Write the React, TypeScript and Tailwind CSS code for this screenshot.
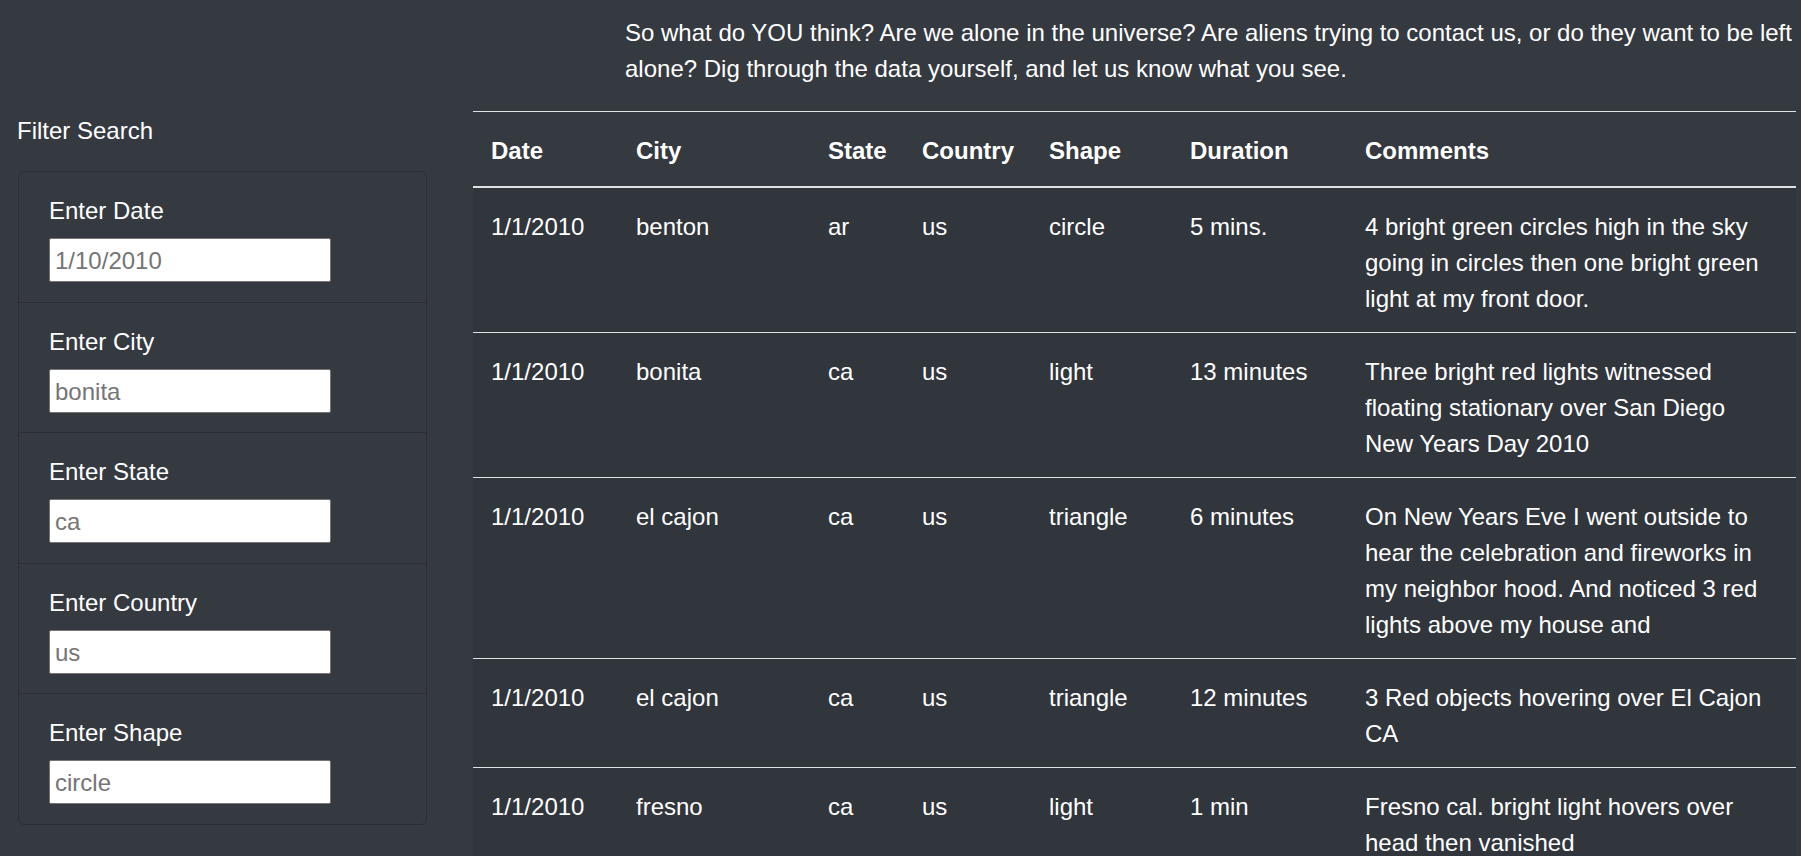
const fields = [
  { label: "Enter Date", placeholder: "1/10/2010" },
  { label: "Enter City", placeholder: "bonita" },
  { label: "Enter State", placeholder: "ca" },
  { label: "Enter Country", placeholder: "us" },
  { label: "Enter Shape", placeholder: "circle" },
];

const sightings = [
  ["1/1/2010", "benton", "ar", "us", "circle", "5 mins.", "4 bright green circles high in the sky going in circles then one bright green light at my front door."],
  ["1/1/2010", "bonita", "ca", "us", "light", "13 minutes", "Three bright red lights witnessed floating stationary over San Diego New Years Day 2010"],
  ["1/1/2010", "el cajon", "ca", "us", "triangle", "6 minutes", "On New Years Eve I went outside to hear the celebration and fireworks in my neighbor hood. And noticed 3 red lights above my house and"],
  ["1/1/2010", "el cajon", "ca", "us", "triangle", "12 minutes", "3 Red objects hovering over El Cajon CA"],
  ["1/1/2010", "fresno", "ca", "us", "light", "1 min", "Fresno cal. bright light hovers over head then vanished"],
];

const headers = ["Date", "City", "State", "Country", "Shape", "Duration", "Comments"];

export default function App() {
  return (
    <div className="flex min-h-screen bg-[#353940] font-['Liberation_Sans',Arial,sans-serif] text-[24px] leading-[36px] text-white">
      <aside className="w-[473px] shrink-0 pl-[18px] pt-[113px]">
        <h5 className="mb-[22px] -ml-px">Filter Search</h5>
        <ul className="w-[409px] rounded-[6px] border border-[#2b2f35]">
          {fields.map((f) => (
            <li
              key={f.label}
              className="border-t border-[#2b2f35] px-[30px] pt-[21px] pb-[19.5px] first:border-t-0"
            >
              <label className="mb-[9px] block">{f.label}</label>
              <input
                type="text"
                placeholder={f.placeholder}
                className="block h-[44px] w-[282px] rounded-[2px] border border-[#767676] bg-white pl-[5px] pt-[2px] text-[24px] text-black placeholder:text-[#757575] outline-none"
              />
            </li>
          ))}
        </ul>
      </aside>

      <main className="flex-1 pr-[5px] pt-[15px]">
        <p className="-mr-[5px] mb-[24px] pl-[152px]">
          So what do YOU think? Are we alone in the universe? Are aliens trying to contact us, or do they want to be left alone? Dig through the data yourself, and let us know what you see.
        </p>

        <table className="w-full table-fixed border-collapse text-left">
          <colgroup>
            <col className="w-[145px]" />
            <col className="w-[192px]" />
            <col className="w-[94px]" />
            <col className="w-[127px]" />
            <col className="w-[141px]" />
            <col className="w-[175px]" />
            <col />
          </colgroup>
          <thead>
            <tr>
              {headers.map((h) => (
                <th
                  key={h}
                  className="border-t border-b-2 border-[#dee2e6] px-[18px] pt-[21px] pb-[17px] align-top font-bold"
                >
                  {h}
                </th>
              ))}
            </tr>
          </thead>
          <tbody className="bg-[#31353c]">
            {sightings.map((row, i) => (
              <tr key={i}>
                {row.map((cell, j) => (
                  <td
                    key={j}
                    className="border-b border-[#dee2e6] px-[18px] pt-[21px] pb-[15px] align-top"
                  >
                    {cell}
                  </td>
                ))}
              </tr>
            ))}
          </tbody>
        </table>
      </main>
    </div>
  );
}
